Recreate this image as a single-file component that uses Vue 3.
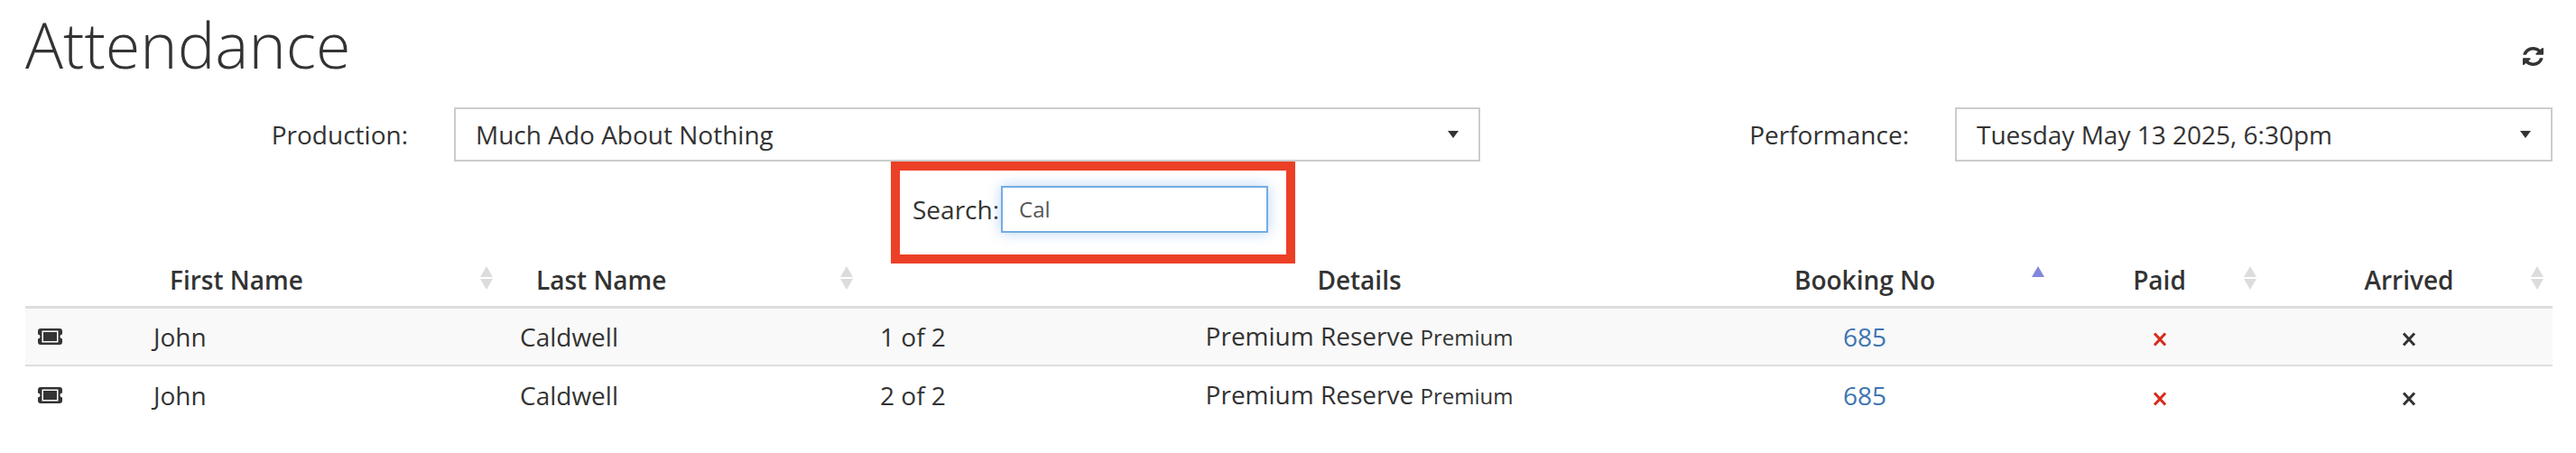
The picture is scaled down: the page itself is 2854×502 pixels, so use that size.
<script setup>
const columns = [
  { key: 'icon', width: 122 },
  { key: 'first', label: 'First Name', width: 406, align: 'left', sort: 'both' },
  { key: 'last', label: 'Last Name', width: 399, align: 'left', sort: 'both' },
  { key: 'seat', width: 200 },
  { key: 'details', label: 'Details', width: 702, align: 'center' },
  { key: 'booking', label: 'Booking No', width: 418, align: 'center', sort: 'asc' },
  { key: 'paid', label: 'Paid', width: 235, align: 'center', sort: 'both' },
  { key: 'arrived', label: 'Arrived', width: 318, align: 'center', sort: 'both' },
]

const rows = [
  { id: 1, first: 'John', last: 'Caldwell', seat: '1 of 2', ticket: 'Premium Reserve', type: 'Premium', booking: '685' },
  { id: 2, first: 'John', last: 'Caldwell', seat: '2 of 2', ticket: 'Premium Reserve', type: 'Premium', booking: '685' },
]
</script>

<template>
  <div class="page">
    <header class="page-head">
      <h1 class="title">Attendance</h1>
      <button type="button" class="refresh" aria-label="Refresh">
        <svg width="23" height="21" viewBox="128 128 1536 1536" preserveAspectRatio="none">
          <path
            fill="#333"
            d="M1639 1056q0 5-1 7-64 268-268 434.5t-478 166.5q-146 0-282.5-55t-243.5-157l-129 129q-19 19-45 19t-45-19-19-45v-448q0-26 19-45t45-19h448q26 0 45 19t19 45-19 45l-137 137q71 66 161 102t187 36q134 0 250-65t186-179q11-17 53-117 8-23 30-23h192q13 0 22.5 9.5t9.5 22.5zm25-800v448q0 26-19 45t-45 19h-448q-26 0-45-19t-19-45 19-45l138-138q-148-137-349-137-134 0-250 65t-186 179q-11 17-53 117-8 23-30 23h-199q-13 0-22.5-9.5t-9.5-22.5v-7q65-268 270-434.5t480-166.5q146 0 284 55.5t245 156.5l130-129q19-19 45-19t45 19 19 45z"
          />
        </svg>
      </button>
    </header>

    <div class="filters">
      <label class="filter-label">Production:</label>
      <div class="select">
        <span>Much Ado About Nothing</span>
        <i class="caret"></i>
      </div>
      <label class="filter-label">Performance:</label>
      <div class="select">
        <span>Tuesday May 13 2025, 6:30pm</span>
        <i class="caret"></i>
      </div>
    </div>

    <div class="search-wrap">
      <label class="search-label" for="search">Search:</label>
      <input id="search" class="search-input" type="text" value="Cal" />
    </div>

    <table class="attendance">
      <colgroup>
        <col v-for="col in columns" :key="col.key" :style="{ width: col.width + 'px' }" />
      </colgroup>
      <thead>
        <tr>
          <th v-for="col in columns" :key="col.key" :class="col.align">
            {{ col.label }}
            <span v-if="col.sort" class="sort">
              <i class="sort-up" :class="{ active: col.sort === 'asc' }"></i>
              <i v-if="col.sort === 'both'" class="sort-down"></i>
            </span>
          </th>
        </tr>
      </thead>
      <tbody>
        <tr v-for="row in rows" :key="row.id">
          <td class="icon-cell">
            <svg width="27" height="18" viewBox="0 0 27 18">
              <path
                fill="#333"
                d="M3 0h21a3 3 0 0 1 3 3v3.5a2.5 2.5 0 0 0 0 5V15a3 3 0 0 1-3 3H3a3 3 0 0 1-3-3v-3.5a2.5 2.5 0 0 0 0-5V3a3 3 0 0 1 3-3z"
              />
              <rect x="5.25" y="3.25" width="16.5" height="11.5" fill="#333" stroke="#fff" stroke-width="1.5" />
            </svg>
          </td>
          <td>{{ row.first }}</td>
          <td>{{ row.last }}</td>
          <td>{{ row.seat }}</td>
          <td class="center">{{ row.ticket }} <small>{{ row.type }}</small></td>
          <td class="center"><a class="booking" href="#">{{ row.booking }}</a></td>
          <td class="center mark-cell paid">
            <svg width="16" height="16" viewBox="0 0 16 16"><path d="M2 1.5l12 13M14 1.5l-12 13" /></svg>
          </td>
          <td class="center mark-cell arrived">
            <svg width="16" height="16" viewBox="0 0 16 16"><path d="M2 1.5l12 13M14 1.5l-12 13" /></svg>
          </td>
        </tr>
      </tbody>
    </table>
  </div>
</template>

<style>
html,
body {
  margin: 0;
  background: #fff;
}
</style>

<style scoped>
.page {
  width: 2800px;
  padding: 0 26px 0 28px;
  font-family: 'Open Sans', 'Noto Sans', sans-serif;
  font-size: 28px;
  color: #333;
}

.page-head {
  display: flex;
  justify-content: space-between;
  height: 119px;
}

.title {
  margin: 0;
  padding-top: 4px;
  font-size: 70px;
  font-weight: 300;
  line-height: 90px;
  letter-spacing: 0;
}

.refresh {
  align-self: flex-start;
  margin: 52px 10px 0 0;
  padding: 0;
  border: 0;
  background: none;
  line-height: 0;
}

.filters {
  display: grid;
  grid-template-columns: 475px 1137px 526px 662px;
  align-items: center;
}

.filter-label {
  padding-right: 51px;
  text-align: right;
}

.select {
  display: flex;
  align-items: center;
  justify-content: space-between;
  box-sizing: border-box;
  height: 60px;
  padding: 0 22px;
  border: 2px solid #ccc;
}

.caret {
  width: 0;
  height: 0;
  border-style: solid;
  border-width: 8px 6px 0;
  border-color: #333 transparent transparent;
}

.search-wrap {
  display: flex;
  align-items: center;
  box-sizing: border-box;
  width: 448px;
  height: 113px;
  margin-left: 959px;
  padding: 0 31px 8px 14px;
  border: 10px solid #ec4026;
}

.search-label {
  margin-right: 2px;
  white-space: nowrap;
}

.search-input {
  box-sizing: border-box;
  width: 296px;
  height: 52px;
  padding: 0 18px;
  border: 2px solid #74ace4;
  border-radius: 0;
  outline: 0;
  box-shadow: 0 0 14px rgba(102, 160, 236, 0.45);
  font-family: inherit;
  font-size: 24px;
  color: #555;
}

.attendance {
  width: 2800px;
  border-collapse: collapse;
  table-layout: fixed;
}

.attendance th {
  position: relative;
  height: 48px;
  padding: 0 0 11px;
  border-bottom: 3px solid #ddd;
  box-sizing: border-box;
  font-weight: 600;
  line-height: 32px;
  text-align: center;
}

.attendance th.left {
  padding-left: 38px;
  text-align: left;
}

.attendance td {
  height: 65px;
  padding: 0 20px;
  box-sizing: border-box;
  line-height: 40px;
}

.attendance tbody tr:first-child td {
  border-bottom: 2px solid #ddd;
  background: #f9f9f9;
}

.attendance td.center {
  text-align: center;
}

.icon-cell {
  padding-left: 14px !important;
  line-height: 0 !important;
}

.attendance small {
  font-size: 24px;
}

.booking {
  color: #3e74b2;
  text-decoration: none;
}

.mark-cell svg {
  display: inline-block;
  vertical-align: middle;
  fill: none;
  stroke-width: 3;
}

.paid svg {
  stroke: #d9291b;
}

.arrived svg {
  stroke: #333;
}

.sort {
  position: absolute;
  top: 3px;
  right: 10px;
  display: flex;
  flex-direction: column;
  gap: 2px;
}

.sort-up,
.sort-down {
  width: 0;
  height: 0;
  border-style: solid;
}

.sort-up {
  border-width: 0 7px 12px;
  border-color: transparent transparent #dcdcdc;
}

.sort-up.active {
  border-bottom-color: #8288dc;
}

.sort-down {
  border-width: 12px 7px 0;
  border-color: #dcdcdc transparent transparent;
}
</style>
